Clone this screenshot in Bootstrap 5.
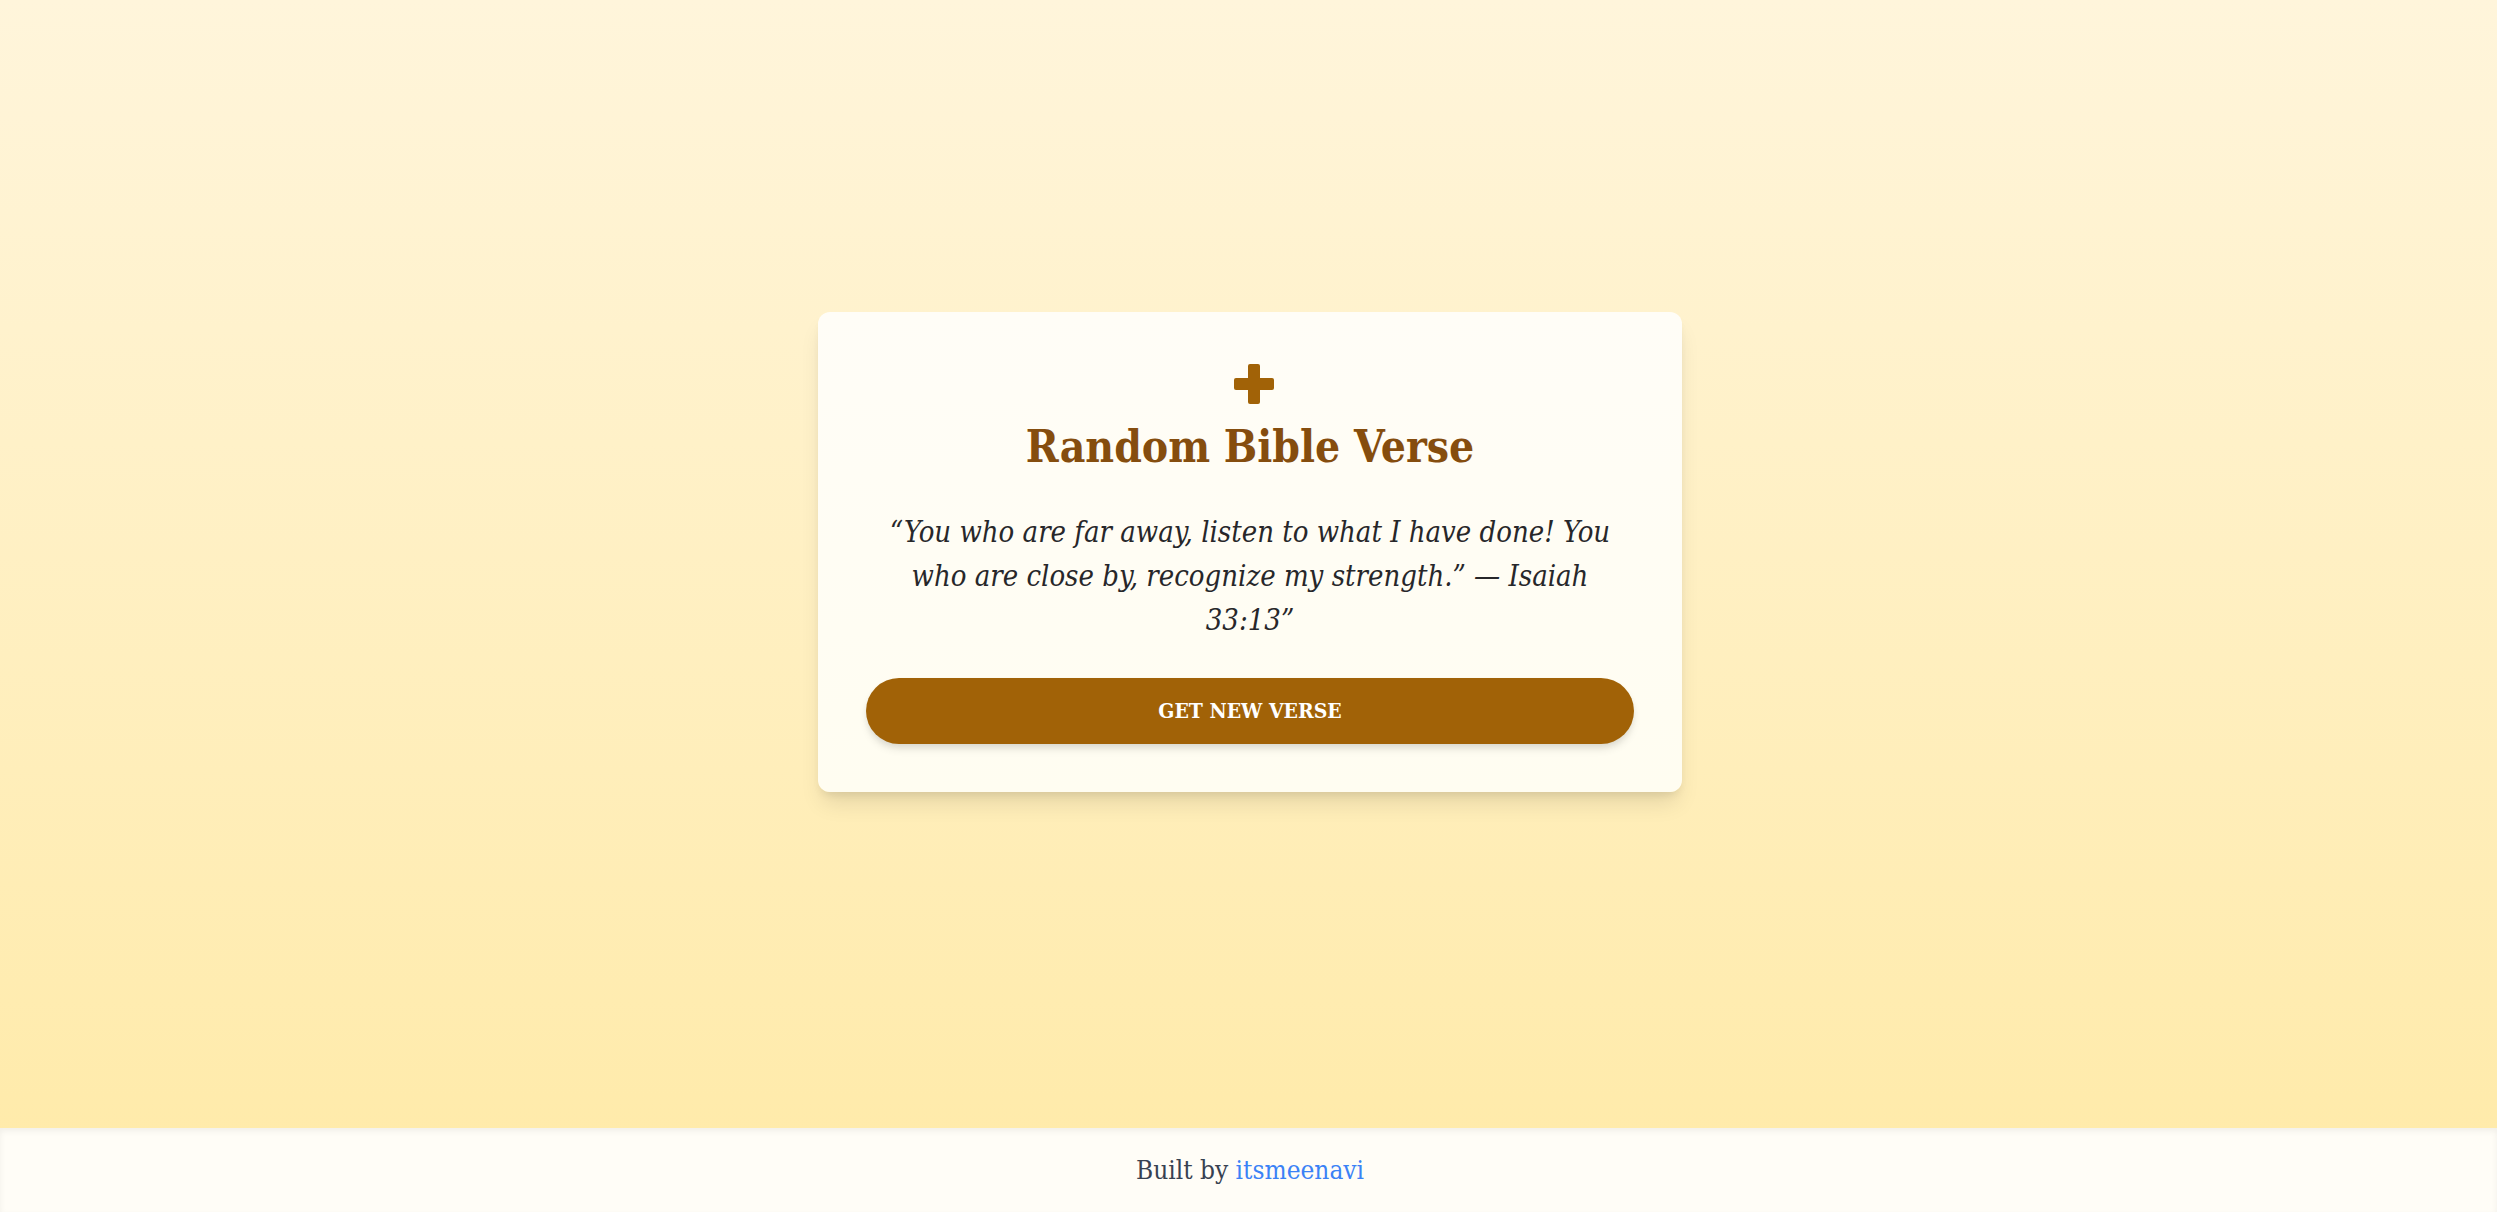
<!DOCTYPE html>
<html lang="en">
<head>
<meta charset="utf-8">
<meta name="viewport" content="width=device-width, initial-scale=1">
<title>Random Bible Verse</title>
<link href="https://cdn.jsdelivr.net/npm/bootstrap@5.3.0/dist/css/bootstrap.min.css" rel="stylesheet">
<style>
  body {
    font-family: "DejaVu Serif Condensed", "DejaVu Serif", serif;
    background: linear-gradient(to bottom, #fff5db 0%, #ffeaa7 100%);
  }
  .page-main { padding: 24px 0 48px 3px; }
  .verse-card {
    width: 100%;
    max-width: 864px;
    padding: 48px;
    border-radius: 12px;
    background: linear-gradient(to bottom, #fffdf7, #fffdf1);
    box-shadow: 0 15px 22px -4px rgba(0, 0, 0, .1), 0 6px 9px -3px rgba(0, 0, 0, .08);
  }
  .verse-icon { fill: #a16207; margin-bottom: 12px; }
  .verse-title { font-size: 44px; line-height: 54px; font-weight: 700; color: #854d0e; margin-bottom: 36px; }
  .verse-text { font-size: 29px; line-height: 44px; color: #27272a; margin-bottom: 36px; }
  .verse-btn {
    --bs-btn-color: #fff;
    --bs-btn-bg: #a16207;
    --bs-btn-hover-color: #fff;
    --bs-btn-hover-bg: #854d0e;
    --bs-btn-active-color: #fff;
    --bs-btn-active-bg: #854d0e;
    height: 66px;
    font-size: 21px;
    line-height: 30px;
    box-shadow: 0 6px 9px -1px rgba(0, 0, 0, .1), 0 3px 6px -1px rgba(0, 0, 0, .06);
  }
  .page-footer {
    padding: 24px 0 24px 3px;
    font-size: 26px;
    line-height: 36px;
    color: #374151;
    background: #fffdf7;
    box-shadow: inset 0 3px 6px rgba(0, 0, 0, .06);
  }
  .page-footer a { color: #3b82f6; }
</style>
</head>
<body class="d-flex flex-column min-vh-100">
<main class="page-main flex-grow-1 d-flex align-items-center justify-content-center">
  <section class="verse-card text-center">
    <svg class="verse-icon d-block mx-auto" width="48" height="48" viewBox="0 0 48 48" aria-hidden="true">
      <rect x="22" y="4" width="12" height="40" rx="2"/>
      <rect x="8" y="18" width="40" height="12" rx="2"/>
    </svg>
    <h1 class="verse-title">Random Bible Verse</h1>
    <p class="verse-text fst-italic px-3">“You who are far away, listen to what I have done! You who are close by, recognize my strength.” — Isaiah 33:13”</p>
    <button type="button" class="btn verse-btn w-100 rounded-pill border-0 fw-bold text-uppercase">Get New Verse</button>
  </section>
</main>
<footer class="page-footer text-center">Built by <a class="text-decoration-none" href="#">itsmeenavi</a></footer>
<script src="https://cdn.jsdelivr.net/npm/bootstrap@5.3.0/dist/js/bootstrap.bundle.min.js"></script>
</body>
</html>
